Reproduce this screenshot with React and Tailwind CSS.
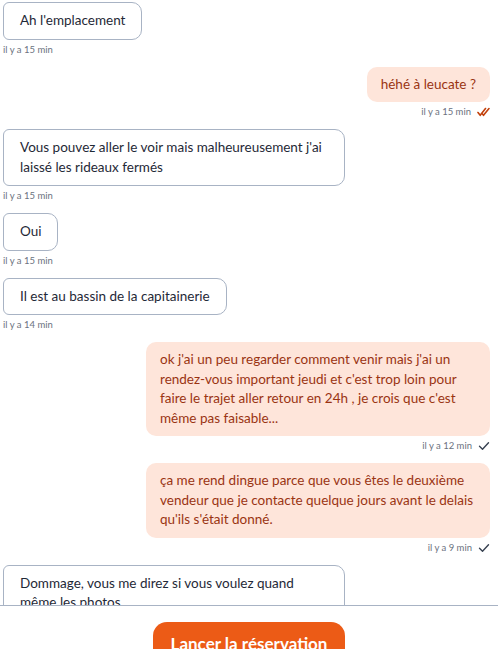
const messages = [
  { from: 'them', text: "Ah l'emplacement", time: 'il y a 15 min' },
  { from: 'me', text: 'héhé à leucate ?', time: 'il y a 15 min', read: true },
  { from: 'them', text: "Vous pouvez aller le voir mais malheureusement j'ai laissé les rideaux fermés", time: 'il y a 15 min' },
  { from: 'them', text: 'Oui', time: 'il y a 15 min' },
  { from: 'them', text: 'Il est au bassin de la capitainerie', time: 'il y a 14 min' },
  {
    from: 'me',
    text: "ok j'ai un peu regarder comment venir mais j'ai un rendez-vous important jeudi et c'est trop loin pour faire le trajet aller retour en 24h , je crois que c'est même pas faisable...",
    time: 'il y a 12 min',
  },
  {
    from: 'me',
    text: "ça me rend dingue parce que vous êtes le deuxième vendeur que je contacte quelque jours avant le delais qu'ils s'était donné.",
    time: 'il y a 9 min',
  },
  { from: 'them', text: 'Dommage, vous me direz si vous voulez quand même les photos...', time: 'il y a 8 min' },
];

function Check({ read }) {
  if (read) {
    return (
      <svg width="13" height="10" viewBox="0 0 13 10" fill="none" stroke="#c2410c" strokeWidth="1.6" strokeLinecap="round" strokeLinejoin="round">
        <path d="M1 5.5l2.2 2.8L8.5 1.5" />
        <path d="M5.2 6.8l1.3 1.5L12 1.5" />
      </svg>
    );
  }
  return (
    <svg width="12" height="10" viewBox="0 0 12 10" fill="none" stroke="#374151" strokeWidth="1.4" strokeLinecap="round" strokeLinejoin="round">
      <path d="M1.5 5.2l3 3L10.5 1.8" />
    </svg>
  );
}

function Bubble({ msg }) {
  const mine = msg.from === 'me';
  return (
    <div className={`flex flex-col ${mine ? 'items-end pr-2' : 'items-start pl-[3px]'}`}>
      <div
        className={`text-[13.5px] leading-[19.5px] ${
          mine
            ? 'max-w-[344px] bg-[#fee5da] text-[#9a3412] rounded-[10px] px-[14px] py-2'
            : 'max-w-[342px] bg-white text-[#1f2937] border border-[#a8b3c4] rounded-[10px] rounded-l-[6px] px-4 py-2'
        }`}
      >
        {msg.text}
      </div>
      <div className="mt-1 mb-[11px] flex h-3 items-center gap-[6px] text-[9.5px] leading-3 text-[#6b7280]">
        <span>{msg.time}</span>
        {mine && <Check read={msg.read} />}
      </div>
    </div>
  );
}

export default function App() {
  return (
    <div className="flex h-[649px] w-full flex-col bg-white" style={{ fontFamily: 'Lato, "Noto Sans", sans-serif' }}>
      <div className="flex-1 overflow-hidden pt-[2px]">
        {messages.map((m, i) => (
          <Bubble key={i} msg={m} />
        ))}
      </div>
      <div className="h-[44px] shrink-0 overflow-hidden border-t border-[#a8b3c4] pt-4">
        <div className="flex justify-center">
          <button className="h-12 w-[192px] rounded-[14px] bg-[#ec5b16] pt-[10px] text-[17px] font-bold leading-6 text-white flex justify-center items-start">
            Lancer la réservation
          </button>
        </div>
      </div>
    </div>
  );
}
